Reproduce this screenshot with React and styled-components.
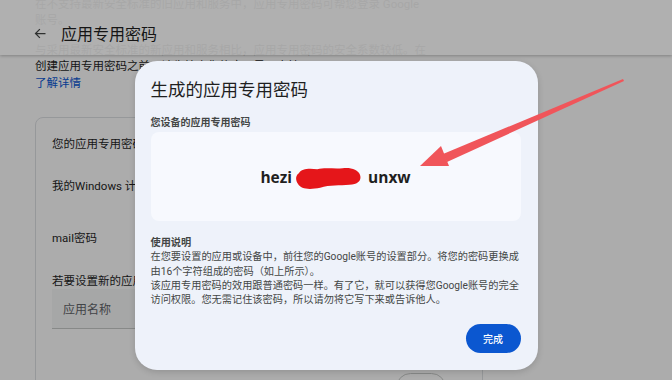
import React from 'react'
import styled, { createGlobalStyle } from 'styled-components'

const GlobalStyle = createGlobalStyle`
  html, body {
    margin: 0;
    padding: 0;
    width: 672px;
    height: 380px;
    overflow: hidden;
    background: #fafafa;
    font-family: Roboto, "Noto Sans CJK SC", sans-serif;
    color: #1f1f1f;
  }
`

const Page = styled.div`
  position: relative;
  width: 672px;
  height: 380px;
  overflow: hidden;
`

// sticky top bar, translucent, the scrolled text shows through it
const TopBar = styled.div`
  position: absolute;
  top: 0;
  left: 0;
  right: 0;
  height: 55px;
  background: rgba(255, 255, 255, 0.94);
  box-shadow: 0 1px 3px rgba(0, 0, 0, 0.25);
  display: flex;
  align-items: center;
  padding: 11px 0 0 33px;
  box-sizing: border-box;
  gap: 13px;
`

const BackIcon = styled.svg`
  width: 15px;
  height: 15px;
  color: #444746;
`

const PageTitle = styled.h1`
  margin: 0;
  font-size: 16px;
  font-weight: 400;
  color: #1f1f1f;
`

const Content = styled.div`
  padding: 0 0 0 35px;
  margin-top: -4px;
  width: 448px;
`

const Para = styled.p`
  margin: 0 0 14px;
  font-size: 11.5px;
  line-height: 16px;
  color: #1f1f1f;
  white-space: nowrap;
`

const Link = styled.a`
  display: block;
  margin-top: -14px;
  font-size: 11.5px;
  line-height: 18px;
  color: #0b57d0;
  text-decoration: none;
`

const Card = styled.div`
  margin-top: 25px;
  border: 1px solid #dadce0;
  border-radius: 8px;
  padding: 18px 16px 0;
  height: 320px;
  box-sizing: border-box;
`

const CardTitle = styled.div`
  font-size: 11.5px;
  line-height: 16px;
  margin-bottom: 7px;
`

const AppRow = styled.div`
  height: 52px;
  display: flex;
  align-items: center;
  font-size: 11.5px;
`

const Hint = styled.div`
  margin-top: 10px;
  font-size: 11.5px;
  line-height: 16px;
`

const NameInput = styled.div`
  height: 40px;
  width: 340px;
  background: #f1f2f2;
  border-bottom: 1px solid #c4c7c5;
  box-sizing: border-box;
  display: flex;
  align-items: center;
  padding-left: 11px;
  font-size: 12px;
  color: #5f6368;
`

const ButtonRow = styled.div`
  display: flex;
  justify-content: flex-end;
  padding-right: 20px;
  margin-top: 44px;
`

const OutlineButton = styled.button`
  width: 50px;
  height: 29px;
  border: 1px solid #c4c7c5;
  border-radius: 15px;
  background: transparent;
  font-size: 10px;
  color: #0b57d0;
`

const Scrim = styled.div`
  position: absolute;
  inset: 0;
  background: rgba(0, 0, 0, 0.31);
  display: flex;
  justify-content: center;
  align-items: flex-start;
  padding-top: 61px;
  box-sizing: border-box;
`

const Dialog = styled.div`
  width: 403px;
  height: 309px;
  box-sizing: border-box;
  background: #eef2fa;
  border-radius: 22px;
  padding: 17px 17px 17px 16px;
  display: flex;
  flex-direction: column;
  box-shadow: 0 2px 6px rgba(0, 0, 0, 0.15);
`

const DialogTitle = styled.h2`
  margin: 0;
  font-size: 17.5px;
  line-height: 24px;
  font-weight: 400;
  color: #1f1f1f;
`

const Label = styled.div`
  margin-top: 14px;
  font-size: 10px;
  line-height: 14px;
  font-weight: 700;
  color: #444746;
`

const PasswordBox = styled.div`
  height: 89px;
  margin-top: 2px;
  background: #f7f9fe;
  border-radius: 8px;
  display: flex;
  align-items: center;
  justify-content: center;
  gap: 2px;
  font-family: "Open Sans", "Noto Sans", sans-serif;
  font-weight: 700;
  font-size: 15.5px;
  color: #1f1f1f;
`

const Redact = styled.svg`
  width: 68px;
  height: 26px;
  margin: 3px 4px 0 0;
`

const Section = styled.div`
  margin-top: 15px;
  font-size: 10.2px;
  line-height: 14.3px;
  color: #444746;
`

const SectionTitle = styled.div`
  font-weight: 700;
  color: #444746;
`

const Actions = styled.div`
  margin-top: auto;
  display: flex;
  justify-content: flex-end;
`

const DoneButton = styled.button`
  width: 55px;
  height: 29px;
  border: none;
  border-radius: 15px;
  background: #0b57d0;
  color: #fff;
  font-family: Roboto, "Noto Sans CJK SC", sans-serif;
  font-size: 10px;
  font-weight: 500;
`

// red annotation arrow drawn over the screenshot
const Annotation = styled.svg`
  position: absolute;
  left: 0;
  top: 0;
  width: 672px;
  height: 380px;
  pointer-events: none;
`

export default function App() {
  return (
    <>
      <GlobalStyle />
      <Page>
        <Content>
          <Para>
            在不支持最新安全标准的旧应用和服务中，应用专用密码可帮您登录 Google
            <br />
            账号。
          </Para>
          <Para>
            与采用最新安全标准的新应用和服务相比，应用专用密码的安全系数较低。在
            <br />
            创建应用专用密码之前，请先检查您的应用是否支持
          </Para>
          <Link href="#">了解详情</Link>
          <Card>
            <CardTitle>您的应用专用密码</CardTitle>
            <AppRow>我的Windows 计算机</AppRow>
            <AppRow>mail密码</AppRow>
            <Hint>若要设置新的应用专用密码，请在下方输入其名称</Hint>
            <NameInput>应用名称</NameInput>
            <ButtonRow>
              <OutlineButton>创建</OutlineButton>
            </ButtonRow>
          </Card>
        </Content>

        <TopBar>
          <BackIcon viewBox="0 0 24 24" fill="none" stroke="currentColor" strokeWidth="2">
            <path d="M20 12H4M11 5l-7 7 7 7" />
          </BackIcon>
          <PageTitle>应用专用密码</PageTitle>
        </TopBar>

        <Scrim>
          <Dialog>
            <DialogTitle>生成的应用专用密码</DialogTitle>
            <Label>您设备的应用专用密码</Label>
            <PasswordBox>
              <span>hezi</span>
              <Redact viewBox="0 0 70 26">
                <path
                  d="M5 8 C8 3 16 3 24 4 C32 2 42 4 50 3 C58 2 66 4 68 10 C70 16 65 20 57 20 C47 21 37 20 27 23 C17 25 7 25 4 19 C1 14 2 10 5 8Z"
                  fill="#e5161a"
                />
              </Redact>
              <span>unxw</span>
            </PasswordBox>
            <Section>
              <SectionTitle>使用说明</SectionTitle>
              在您要设置的应用或设备中，前往您的Google账号的设置部分。将您的密码更换成
              <br />
              由16个字符组成的密码（如上所示）。
              <br />
              该应用专用密码的效用跟普通密码一样。有了它，就可以获得您Google账号的完全
              <br />
              访问权限。您无需记住该密码，所以请勿将它写下来或告诉他人。
            </Section>
            <Actions>
              <DoneButton>完成</DoneButton>
            </Actions>
          </Dialog>
        </Scrim>

        <Annotation viewBox="0 0 672 380">
          <polygon points="623,79 624,81 447,162 443,154" fill="#f0555a" />
          <polygon points="420,166 441,146 449,166" fill="#f0555a" />
        </Annotation>
      </Page>
    </>
  )
}
